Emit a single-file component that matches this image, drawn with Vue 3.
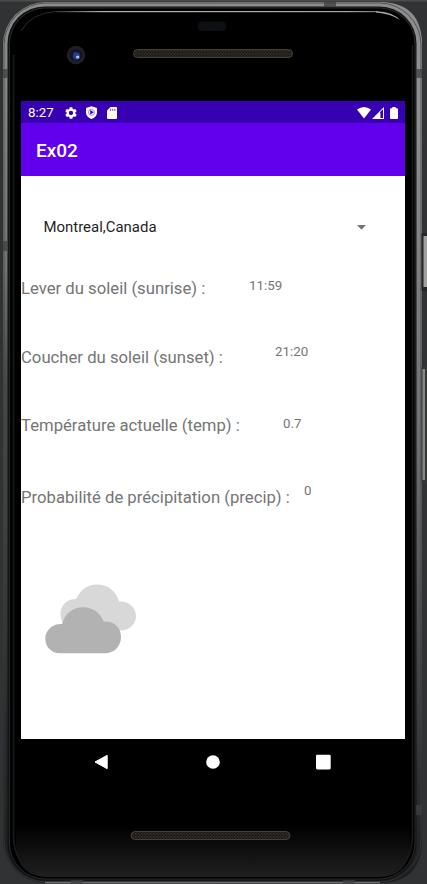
<script setup>
const rows = [
  { id: 'sunrise', label: 'Lever du soleil (sunrise) :', value: '11:59' },
  { id: 'sunset', label: 'Coucher du soleil (sunset) :', value: '21:20' },
  { id: 'temp', label: 'Température actuelle (temp) :', value: '0.7' },
  { id: 'precip', label: 'Probabilité de précipitation (precip) :', value: '0' },
]
</script>

<template>
  <div class="stage">
    <svg class="frame" width="427" height="884" viewBox="0 0 427 884" aria-hidden="true">
      <defs>
        <linearGradient id="metal" x1="0" y1="0" x2="0" y2="1">
          <stop offset="0" stop-color="#8c8c8c" />
          <stop offset="0.3" stop-color="#717373" />
          <stop offset="0.43" stop-color="#484a4a" />
          <stop offset="0.6" stop-color="#3e4041" />
          <stop offset="0.85" stop-color="#25282a" />
          <stop offset="1" stop-color="#1c1e20" />
        </linearGradient>
        <linearGradient id="metalRight" x1="0" y1="0" x2="0" y2="1">
          <stop offset="0" stop-color="#8c8c8c" />
          <stop offset="0.1" stop-color="#8f9193" />
          <stop offset="0.5" stop-color="#6d6f72" />
          <stop offset="0.8" stop-color="#3c3e41" />
          <stop offset="1" stop-color="#1a1c1e" />
        </linearGradient>
        <linearGradient id="chin" x1="0" y1="0" x2="0" y2="1">
          <stop offset="0" stop-color="#000" />
          <stop offset="1" stop-color="#202020" />
        </linearGradient>
        <linearGradient id="shine" x1="0" y1="0" x2="1" y2="0">
          <stop offset="0" stop-color="#333" />
          <stop offset="0.15" stop-color="#b5b5b5" />
          <stop offset="0.9" stop-color="#a5a5a5" />
          <stop offset="1" stop-color="#777" />
        </linearGradient>
        <pattern id="mesh" width="3" height="3" patternUnits="userSpaceOnUse">
          <path d="M0 0L1.5 1.5L0 3M1.5 0L3 1.5L1.5 3" fill="none" stroke="#4a463e" stroke-width="0.5" />
        </pattern>
      </defs>
      <rect width="427" height="884" fill="#303233" />
      <rect width="427" height="1.5" fill="#4a4b4b" />
      <rect x="3" y="2" width="419" height="881" rx="43" fill="url(#metal)" />
      <path d="M213 2H379Q422 2 422 45V840Q422 883 379 883H213Z" fill="url(#metalRight)" />
      <path d="M45 882.5H380" stroke="#858585" stroke-width="1.5" />
      <rect x="4" y="3" width="417" height="879" rx="42" fill="none" stroke="#3a3c3d" stroke-opacity="0.7" />
      <rect x="7.5" y="6.5" width="409" height="874" rx="37" fill="#111213" />
      <rect x="9.5" y="8" width="405.5" height="871" rx="36" fill="#000" stroke="#303131" stroke-width="0.8" />
      <path d="M16 825H410V845Q409 877 378 877H48Q17 877 16 845Z" fill="url(#chin)" />
      <path d="M13.5 55V835Q14 865 36 874M412.5 45V835Q412 865 390 874" fill="none" stroke="#191a1b" stroke-width="1.6" />
      <rect x="56" y="11" width="322" height="1.2" fill="url(#shine)" />
      <path d="M376 11.2Q393 12 400 20Q391 14 376 12.6Z" fill="#aaa" />
      <path d="M21 31Q31 13 56 11.5" fill="none" stroke="#292b2b" stroke-width="1" />
      <path d="M3 69H8V78H3ZM3 241H8V251H3ZM416 69H422V78H416ZM416 805H422V815H416ZM324 2H336V7H324ZM71 880H83V884H71ZM343 880H355V884H343Z" fill="#3e4040" fill-opacity="0.75" />
      <rect x="421.5" y="233" width="6" height="58" rx="1" fill="#242525" />
      <rect x="423.5" y="236" width="4" height="51" fill="#a0a0a0" />
      <rect x="421.5" y="366" width="6" height="118" rx="1" fill="#343636" />
      <rect x="422.5" y="369" width="2.5" height="111" fill="#858785" />
      <rect x="198" y="21.5" width="28" height="9.5" rx="4" fill="#0d0f13" />
      <circle cx="76" cy="55" r="9.2" fill="#202022" />
      <circle cx="76" cy="55" r="6.2" fill="#11142a" />
      <circle cx="76.5" cy="56" r="3.7" fill="#233b82" />
      <circle cx="77.7" cy="57" r="1.6" fill="#b3c6ff" />
      <circle cx="74.7" cy="53" r="0.8" fill="#3a528c" />
      <rect x="133.5" y="49.5" width="159" height="8" rx="4" fill="#151411" />
      <rect x="133.5" y="49.5" width="159" height="8" rx="4" fill="url(#mesh)" stroke="#464138" />
      <rect x="131" y="831.5" width="159" height="8" rx="4" fill="#151411" />
      <rect x="131" y="831.5" width="159" height="8" rx="4" fill="url(#mesh)" stroke="#464138" />
    </svg>

    <main class="screen">
      <div class="status">
        <span class="time">8:27</span>
        <svg class="icon gear" viewBox="2 2 20 20"><path fill="#fff" d="M19.14 12.94c.04-.3.06-.61.06-.94s-.02-.64-.07-.94l2.03-1.58a.49.49 0 0 0 .12-.61l-1.92-3.32a.49.49 0 0 0-.59-.22l-2.39.96a7 7 0 0 0-1.62-.94l-.36-2.54a.48.48 0 0 0-.48-.41h-3.84a.48.48 0 0 0-.47.41l-.36 2.54c-.59.24-1.13.57-1.62.94l-2.39-.96a.48.48 0 0 0-.59.22L2.74 8.87a.48.48 0 0 0 .12.61l2.03 1.58a7 7 0 0 0 0 1.88l-2.03 1.58a.49.49 0 0 0-.12.61l1.92 3.32c.12.22.37.29.59.22l2.39-.96c.5.38 1.03.7 1.62.94l.36 2.54c.05.24.24.41.48.41h3.84c.24 0 .44-.17.47-.41l.36-2.54a7 7 0 0 0 1.62-.94l2.39.96c.22.08.47 0 .59-.22l1.92-3.32a.48.48 0 0 0-.12-.61l-2.03-1.58ZM12 15.6a3.6 3.6 0 1 1 0-7.2 3.6 3.6 0 0 1 0 7.2Z" /></svg>
        <svg class="icon shield" viewBox="0 0 11 13"><path fill="#fff" d="M5.5 0.2L11 2V6.3C11 9.4 8.7 12 5.5 13C2.3 12 0 9.4 0 6.3V2Z" /><circle cx="5.5" cy="6.3" r="3" fill="none" stroke="#3700b3" stroke-width="0.8" opacity="0.6" /><path d="M4.2 4L7.9 6.3L4.2 8.6Z" fill="#3700b3" /></svg>
        <svg class="icon card" viewBox="0 0 10 12"><path fill="#fff" d="M3.5 0H9Q10 0 10 1V11Q10 12 9 12H1Q0 12 0 11V3.5Z" /><path d="M3.6 1.8V4M5.7 1.8V4M7.8 1.8V4" stroke="#3700b3" stroke-width="0.9" opacity="0.75" /></svg>
        <span class="spacer"></span>
        <svg class="icon wifi" viewBox="0 0 14 12"><path fill="#fff" d="M0 2.6Q7-2.5 14 2.6L7 11.5Z" /></svg>
        <svg class="icon signal" viewBox="0 0 12 12"><path d="M0 12L12 0V12Z" fill="#fff" /><path d="M8.2 5L11 2.2V11H8.2Z" fill="#3700b3" /><path d="M8.3 6V11" stroke="#fff" stroke-opacity="0.35" /></svg>
        <svg class="icon battery" viewBox="0 0 8 12"><path fill="#fff" d="M2.3 0H5.7V1.2H7Q8 1.2 8 2.2V11Q8 12 7 12H1Q0 12 0 11V2.2Q0 1.2 1 1.2H2.3Z" /></svg>
      </div>

      <header class="appbar">Ex02</header>

      <section class="content">
        <div class="spinner">
          <span>Montreal,Canada</span>
          <svg class="caret" viewBox="0 0 9 5"><path d="M0 0H9L4.5 4.7Z" fill="#757575" /></svg>
        </div>
        <div class="rows">
          <div v-for="row in rows" :key="row.id" class="row" :class="row.id">
            <span class="label">{{ row.label }}</span>
            <span class="value">{{ row.value }}</span>
          </div>
        </div>
        <svg class="weather" viewBox="0 0 92 71">
          <path fill="#d8d8d8" d="M31 46Q15.5 43 15.5 30C15.5 21 22 15 31 15C36 5 43 0.5 52 0.5C63 0.5 71 7 74 17.6C83 16.5 91 23 91 32C91 40 84.5 46.5 76 46.5Z" />
          <path fill="#b2b2b2" d="M15 69.3C6.5 69.3 0.3 63 0.3 54.8C0.3 46 7.5 39.5 17.2 40C19.5 30 27.5 23.2 38 23.2C48 23.2 54.5 28.5 59 37.7C68.5 36.5 76 43.5 76 53C76 62.5 69 69.3 60 69.3Z" />
        </svg>
      </section>
    </main>

    <nav class="navbar">
      <svg viewBox="0 0 14 16"><path d="M13.2 1.3V14.7L1 8Z" fill="#fff" stroke="#fff" stroke-linejoin="round" /></svg>
      <svg class="home" viewBox="0 0 14 16"><circle cx="7" cy="8" r="6.8" fill="#fff" /></svg>
      <svg class="recent" viewBox="0 0 15 16"><rect y="0.7" width="14.7" height="14.7" rx="1.3" fill="#fff" /></svg>
    </nav>
  </div>
</template>

<style>
body {
  margin: 0;
  background: #303233;
}
</style>

<style scoped>
.stage {
  position: relative;
  box-sizing: border-box;
  width: 427px;
  height: 884px;
  padding: 101px 22px 0 21px;
  overflow: hidden;
  font-family: Roboto, sans-serif;
}
.frame {
  position: absolute;
  inset: 0;
}
.screen {
  position: relative;
  width: 384px;
  height: 638px;
  background: #fff;
}
.status {
  display: flex;
  align-items: center;
  box-sizing: border-box;
  height: 22px;
  padding: 1px 7px 0 7px;
  background: #3700b3;
  color: #fff;
}
.icon {
  display: block;
  flex: none;
}
.time {
  width: 37px;
  font-size: 13.3px;
  line-height: 22px;
}
.gear { width: 12px; height: 12px; }
.shield { width: 11px; height: 13px; margin-left: 9px; }
.card { width: 10px; height: 12px; margin-left: 10px; }
.spacer { flex: 1; }
.wifi { width: 14px; height: 12px; }
.signal { width: 12px; height: 12px; margin-left: 1px; }
.battery { width: 8px; height: 12px; margin-left: 6px; }
.appbar {
  box-sizing: border-box;
  height: 53px;
  padding: 2px 0 0 15px;
  background: #6200ee;
  color: #fff;
  font-size: 19px;
  font-weight: 500;
  line-height: 52px;
}
.content {
  padding-top: 40px;
}
.spinner {
  display: flex;
  align-items: center;
  justify-content: space-between;
  height: 22px;
  padding: 0 39px 0 22.5px;
  color: #1f1f1f;
  font-size: 14.95px;
}
.caret {
  width: 9px;
  height: 5px;
}
.rows {
  padding-top: 36px;
}
.row {
  display: flex;
  align-items: flex-start;
  height: 69px;
  color: #757575;
}
.label {
  margin-top: 5px;
  font-size: 16.7px;
  line-height: 20px;
  white-space: nowrap;
}
.value {
  margin-top: 4px;
  font-size: 13.3px;
  line-height: 16px;
}
.sunrise .label { width: 228px; }
.sunset .label { width: 254px; }
.sunset .value { margin-top: 1px; }
.temp { height: 71px; }
.temp .label { width: 262px; margin-top: 4px; }
.precip .label { width: 283px; }
.precip .value { margin-top: 0; }
.weather {
  display: block;
  width: 92px;
  height: 71px;
  margin: 32px 0 0 23.5px;
}
.navbar {
  position: relative;
  display: flex;
  align-items: center;
  justify-content: space-between;
  height: 45px;
  padding: 0 74px 0 73px;
}
.navbar svg {
  width: 14px;
  height: 16px;
}
.navbar .home { margin-left: 1.5px; }
.navbar .recent { width: 15px; }
</style>
